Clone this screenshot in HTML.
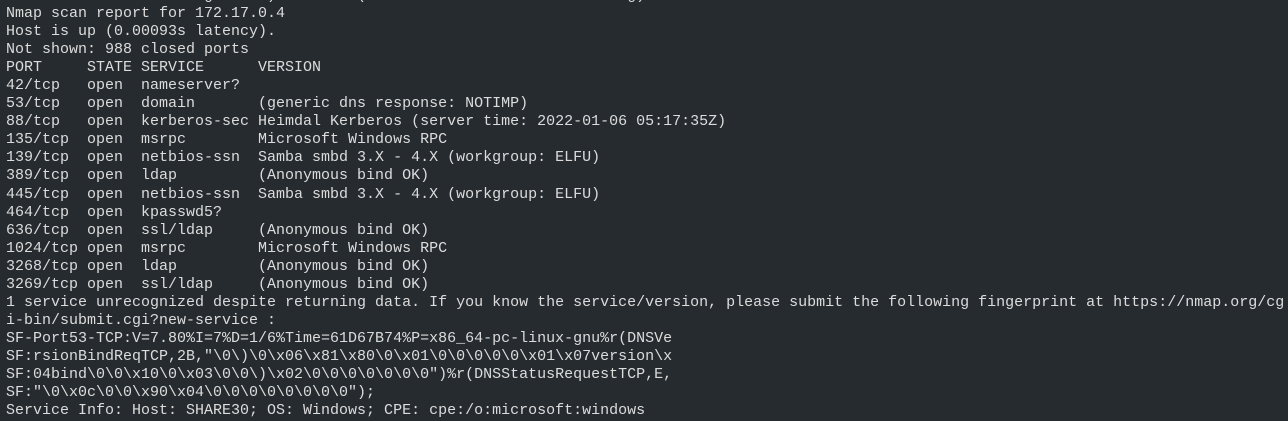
<!DOCTYPE html>
<html><head><meta charset="utf-8"><style>
html,body{margin:0;padding:0;background:#262b2f;width:1288px;height:421px;overflow:hidden}
pre{position:absolute;left:6px;top:-13px;margin:0;font-family:"Liberation Mono",monospace;font-size:15px;line-height:18.05px;color:#dcdcdc;white-space:pre}
</style></head><body><pre>                      g      )         (                             g)
Nmap scan report for 172.17.0.4
Host is up (0.00093s latency).
Not shown: 988 closed ports
PORT     STATE SERVICE      VERSION
42/tcp   open  nameserver?
53/tcp   open  domain       (generic dns response: NOTIMP)
88/tcp   open  kerberos-sec Heimdal Kerberos (server time: 2022-01-06 05:17:35Z)
135/tcp  open  msrpc        Microsoft Windows RPC
139/tcp  open  netbios-ssn  Samba smbd 3.X - 4.X (workgroup: ELFU)
389/tcp  open  ldap         (Anonymous bind OK)
445/tcp  open  netbios-ssn  Samba smbd 3.X - 4.X (workgroup: ELFU)
464/tcp  open  kpasswd5?
636/tcp  open  ssl/ldap     (Anonymous bind OK)
1024/tcp open  msrpc        Microsoft Windows RPC
3268/tcp open  ldap         (Anonymous bind OK)
3269/tcp open  ssl/ldap     (Anonymous bind OK)
1 service unrecognized despite returning data. If you know the service/version, please submit the following fingerprint at https://nmap.org/cg
i-bin/submit.cgi?new-service :
SF-Port53-TCP:V=7.80%I=7%D=1/6%Time=61D67B74%P=x86_64-pc-linux-gnu%r(DNSVe
SF:rsionBindReqTCP,2B,"\0\)\0\x06\x81\x80\0\x01\0\0\0\0\0\x01\x07version\x
SF:04bind\0\0\x10\0\x03\0\0\)\x02\0\0\0\0\0\0\0")%r(DNSStatusRequestTCP,E,
SF:"\0\x0c\0\0\x90\x04\0\0\0\0\0\0\0\0");
Service Info: Host: SHARE30; OS: Windows; CPE: cpe:/o:microsoft:windows</pre></body></html>
